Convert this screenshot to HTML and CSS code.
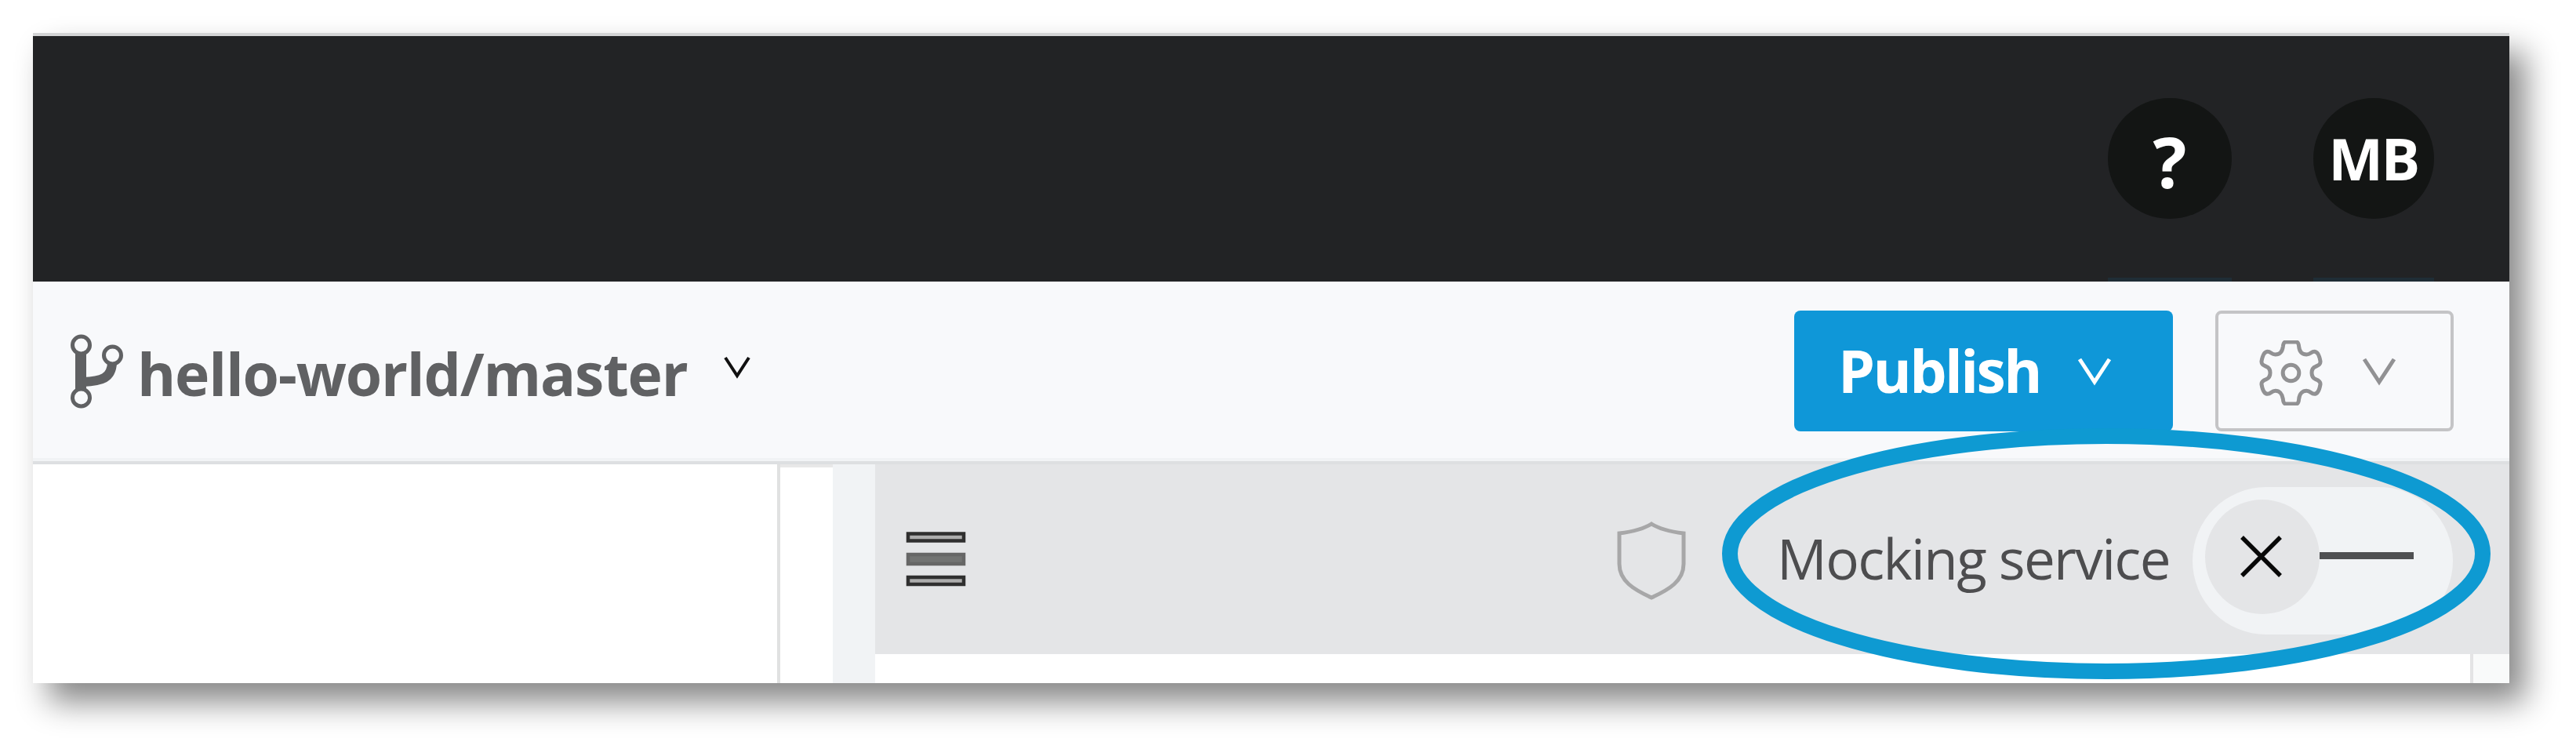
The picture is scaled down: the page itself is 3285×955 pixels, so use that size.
FILE: index.html
```html
<!DOCTYPE html>
<html lang="en">
<head>
<meta charset="utf-8">
<title>hello-world/master</title>
<link rel="stylesheet" href="styles.css">
</head>
<body>
<div class="window">
  <header class="topbar">
    <div class="round help"><span class="help-mark">?</span></div>
    <div class="round avatar"><span class="initials">MB</span></div>
  </header>
  <div class="toolbar">
    <svg class="branch-icon" viewBox="88 425 70 96" fill="none" stroke="#606163">
      <path d="M103 451V496" stroke-width="14"/>
      <path d="M106 487C130 486 142 482 143 463" stroke-width="12"/>
      <g stroke-width="5"><circle cx="103.500" cy="440" r="11"/><circle cx="143.500" cy="453" r="11"/><circle cx="103.500" cy="507" r="11" fill="#f8f9fb"/></g>
    </svg>
    <span class="branch-name">hello-world/master</span>
    <svg class="branch-chevron" viewBox="0 0 38 30"><path d="M4 2L19 25L34 2"/></svg>
    <button class="publish"><span class="publish-label">Publish</span>
      <svg class="chevron" viewBox="0 0 48 38"><path d="M4 4L23 33L42 4"/></svg>
    </button>
    <button class="settings">
      <svg class="gear" viewBox="297 162 252 249">
        <path d="M405 168H444C452 168 454 175 455 186C457 207 469 216 484 216C500 216 501 205 514 205C530 205 535 231 537 242C538 254 530 257 519 262C506 267 504 277 504 286C504 295 506 306 519 311C530 315 538 319 537 330C535 342 530 367 514 367C501 367 500 355 484 355C469 355 457 366 455 386C454 398 452 405 444 405H405C397 405 395 398 394 386C391 366 380 355 365 355C349 355 348 367 335 367C319 367 314 342 312 330C311 319 319 315 330 311C343 306 345 295 345 286C345 277 343 267 330 262C319 257 311 254 312 242C314 231 319 205 335 205C348 205 349 216 365 216C380 216 391 207 394 186C395 175 397 168 405 168Z"/>
        <circle cx="424.500" cy="286.500" r="31"/>
      </svg>
      <svg class="chevron" viewBox="0 0 48 38"><path d="M4 4L23 33L42 4"/></svg>
    </button>
  </div>
  <main class="content">
    <div class="pane"></div>
    <div class="strip"></div>
    <div class="gutter"></div>
    <section class="preview">
      <div class="preview-bar">
        <svg class="menu-icon" viewBox="0 0 80 76">
          <rect x="5" y="5.500" width="71" height="9"/><rect class="mid" x="5" y="32" width="71" height="12"/><rect x="5" y="61" width="71" height="9"/>
        </svg>
        <svg class="shield" viewBox="0 0 88 104"><path d="M44 5C33 12 19 15 3 17V56C3 78 22 89 44 99C66 89 85 78 85 56V17C69 15 55 12 44 5Z"/></svg>
        <span class="mock-label">Mocking service</span>
        <div class="toggle">
          <div class="knob"><svg class="cross" viewBox="0 0 56 56"><path d="M4 4L53 53M53 4L4 53"/></svg></div>
          <div class="dash"></div>
        </div>
      </div>
      <div class="preview-body"><div class="scrollbar"></div></div>
    </section>
  </main>
  <svg class="highlight" viewBox="0 0 984 326"><ellipse cx="492" cy="162" rx="480" ry="150"/></svg>
</div>
</body>
</html>
```
FILE: styles.css
```css
* { box-sizing: border-box; }
body {
  margin: 0;
  padding: 42px 0 0 42px;
  height: 955px;
  overflow: hidden;
  background: #fff;
  font-family: "Open Sans", sans-serif;
}
svg { display: block; flex: none; fill: none; }
.window {
  position: relative;
  width: 3158px;
  height: 829px;
  background: #fff;
  box-shadow: 20px 24px 38px rgba(0, 0, 0, .47);
}
.topbar {
  height: 317px;
  border-top: 4px solid #d3d4d5;
  background: #222325;
  display: flex;
  justify-content: flex-end;
  gap: 104px;
  padding: 79px 96px 0 0;
}
.round {
  position: relative;
  height: 154px;
  border-radius: 50%;
  background: #131514;
  color: #fff;
  display: flex;
  align-items: center;
  justify-content: center;
  font-weight: 700;
}
.round::after {
  content: "";
  position: absolute;
  left: 0;
  right: 0;
  top: 229px;
  height: 5px;
  background: #1f2d36;
}
.help { width: 158px; }
.avatar { width: 154px; }
.help-mark { font-size: 90px; font-weight: 700; line-height: 154px; padding-top: 5px; }
.initials { font-size: 74px; line-height: 150px; letter-spacing: -2.5px; padding-right: 1px; }
.toolbar {
  height: 233px;
  background: #f8f9fb;
  border-bottom: 4px solid #dddfe1;
  box-shadow: inset 0 -4px #f1f3f5;
  display: flex;
  align-items: flex-start;
  padding: 37px 71px 0 46px;
}
.branch-icon { width: 70px; height: 96px; margin-top: 29px; }
.branch-name {
  margin-left: 17px;
  width: 746px;
  color: #606163;
  font-size: 75px;
  font-weight: 700;
  line-height: 160px;
  letter-spacing: -1.2px;
  white-space: nowrap;
}
.branch-chevron { width: 38px; height: 30px; margin-top: 58px; stroke: #111; stroke-width: 4; }
button { font: inherit; border: 0; padding: 0; display: flex; align-items: flex-start; height: 154px; border-radius: 8px; }
.publish { margin-left: auto; width: 483px; background: #0f97d8; color: #fff; padding-left: 56px; }
.publish-label { width: 304px; text-align: left; font-size: 75px; font-weight: 700; line-height: 152px; letter-spacing: -2.6px; }
.chevron { width: 48px; height: 38px; margin-top: 58px; stroke: #fff; stroke-width: 5; }
.settings { margin-left: 54px; width: 304px; border: 4px solid #c4c4c6; background: transparent; padding-left: 50px; }
.gear { width: 84px; height: 83px; margin-top: 34px; stroke: #919193; stroke-width: 15; }
.settings .chevron { margin: 54px 0 0 48px; stroke: #919193; }
.content { height: 279px; display: flex; }
.pane { width: 954px; border-right: 4px solid #e0e1e1; }
.strip { width: 67px; border-top: 4px solid #e8e8e8; }
.gutter { width: 54px; background: #f1f3f5; }
.preview { flex: 1; display: flex; flex-direction: column; }
.preview-bar { height: 242px; background: #e4e5e7; display: flex; align-items: flex-start; padding: 29px 72px 0 37px; }
.menu-icon { width: 80px; height: 76px; margin-top: 54px; stroke: #2f2f2f; stroke-width: 4.5; fill: #adadad; }
.menu-icon .mid { fill: #727372; stroke: #666; }
.shield { width: 88px; height: 104px; margin: 42px 0 0 829px; stroke: #a7a7a8; stroke-width: 5; }
.mock-label { margin-left: 116px; width: 530px; color: #4d4d4f; font-size: 71px; line-height: 182px; letter-spacing: -1.7px; white-space: nowrap; }
.toggle { width: 332px; height: 188px; border-radius: 94px; background: #f1f3f5; padding: 16px; display: flex; }
.knob { width: 146px; height: 146px; border-radius: 50%; background: #e4e5e7; padding: 44px 0 0 43px; }
.cross { width: 56px; height: 56px; stroke: #080808; stroke-width: 5.500; }
.dash { width: 120px; height: 9px; margin-top: 67px; background: #4f5052; }
.preview-body { flex: 1; display: flex; justify-content: flex-end; background: #fff; }
.scrollbar { width: 50px; border-left: 4px solid #e4e4e5; background: #f9fafa; }
.highlight { position: absolute; left: 2152px; top: 502px; width: 984px; height: 326px; stroke: #0e9ad2; stroke-width: 20; }
```
